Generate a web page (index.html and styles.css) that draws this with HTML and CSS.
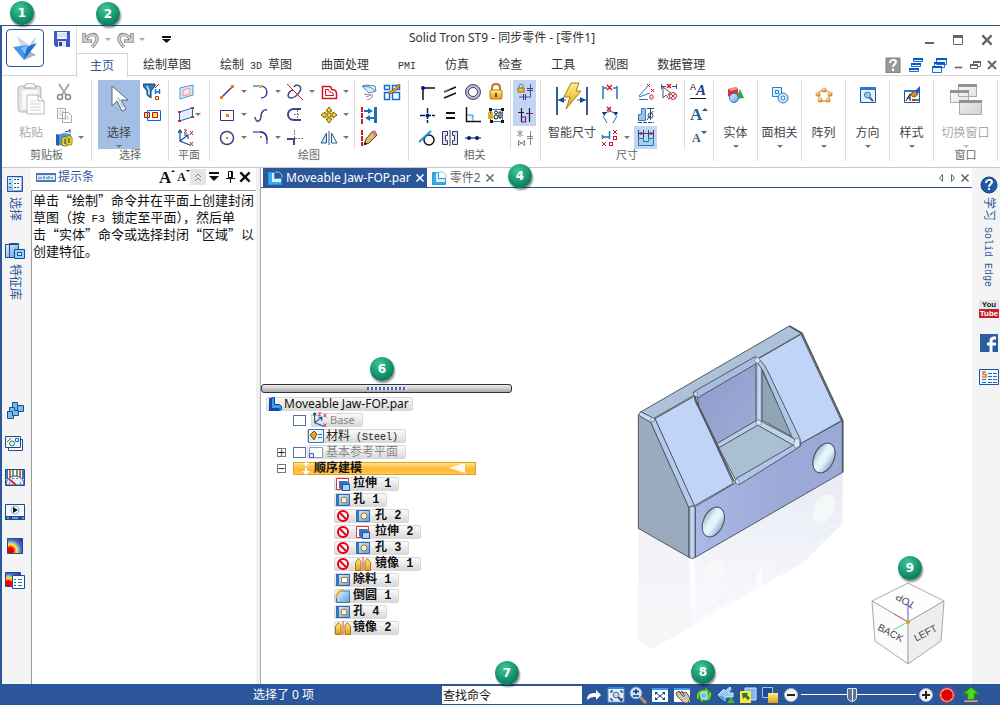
FILE: index.html
```html
<!DOCTYPE html>
<html lang="zh-CN">
<head>
<meta charset="utf-8">
<title>Solid Tron ST9 - 同步零件 - [零件1]</title>
<link rel="stylesheet" href="styles.css">
</head>
<body>
<svg class="sprite" aria-hidden="true">
  <defs>
    <linearGradient id="gBlue" x1="0" y1="0" x2="1" y2="1"><stop offset="0" stop-color="#e8f4ff"/><stop offset="1" stop-color="#5c9be0"/></linearGradient>
    <linearGradient id="gGold" x1="0" y1="0" x2="0" y2="1"><stop offset="0" stop-color="#fff08a"/><stop offset="1" stop-color="#e0a010"/></linearGradient>
    <linearGradient id="gGrey" x1="0" y1="0" x2="1" y2="1"><stop offset="0" stop-color="#fff"/><stop offset="1" stop-color="#d2d2d2"/></linearGradient>
    <linearGradient id="gFront" x1="0" y1="0" x2="1" y2="0"><stop offset="0" stop-color="#a9b8e5"/><stop offset=".6" stop-color="#9aa9d6"/><stop offset="1" stop-color="#9ba9d5"/></linearGradient>
    <linearGradient id="gBack" x1="0" y1="0" x2="1" y2="1"><stop offset="0" stop-color="#8f9ccc"/><stop offset="1" stop-color="#9dabd6"/></linearGradient>
    <linearGradient id="gHole" x1="0" y1="0" x2="1" y2=".3"><stop offset="0" stop-color="#8ea1b8"/><stop offset=".45" stop-color="#e4f4fc"/><stop offset=".7" stop-color="#e4f4fc"/><stop offset="1" stop-color="#a3b9d2"/></linearGradient>
    <linearGradient id="gEdge" x1="0" y1="0" x2="1" y2="0"><stop offset="0" stop-color="#8ea3c4"/><stop offset=".5" stop-color="#d0e2fb"/><stop offset="1" stop-color="#93a7cd"/></linearGradient>
    <linearGradient id="gMirror" x1="0" y1="0" x2="0" y2="1"><stop offset="0" stop-color="#e8ebf5"/><stop offset=".9" stop-color="#fafbfd"/></linearGradient>
    <radialGradient id="gHeat" cx=".2" cy=".8" r="1"><stop offset="0" stop-color="#e00"/><stop offset=".2" stop-color="#e00"/><stop offset=".3" stop-color="#ff8c1a"/><stop offset=".42" stop-color="#ffe93b"/><stop offset=".55" stop-color="#8fb6c8"/><stop offset=".7" stop-color="#4a6fc9"/><stop offset="1" stop-color="#5a2a9c"/></radialGradient>
    <radialGradient id="gBall" cx=".4" cy=".3" r=".8"><stop offset="0" stop-color="#ffdf9e"/><stop offset="1" stop-color="#c46a10"/></radialGradient>
  </defs>

  <symbol id="logo" viewBox="0 0 36 36"><path d="M10 6l12 9-8 3z" fill="#d0dbe8"/><path d="M29 6l-8 11 5 1z" fill="#c3cbd8"/><path d="M21 20l8 5-12 5z" fill="#a4b4ca"/><path d="M6 17l15-2-4 15z" fill="#3e96ee"/><path d="M30 13l-11 4-2 13z" fill="#1f6fd6"/><path d="M14 18l7-3-3 9z" fill="#7fc0f8"/></symbol>
  <symbol id="save" viewBox="0 0 16 16"><path d="M0 0h16v16H2l-2-2z" fill="#4258c0"/><path d="M3 1h10v7H3z" fill="#eef2fb"/><path d="M3 3h10M3 5h10" stroke="#c4cfe8"/><path d="M4 10h8v6H4z" fill="#dfe4f4"/><path d="M5 11h3v4H5z" fill="#31439c"/></symbol>
  <symbol id="undo" viewBox="0 0 18 18"><path d="M2 2v8h8M3 9C6 3 15 1 15 8c0 3-2 5-5 8" fill="none" stroke="#8f8f8f" stroke-width="3.500"/><path d="M2 3v7h7M3 9C6 3 15 2 15 8c0 3-2 5-5 8" fill="none" stroke="#d6d6d6" stroke-width="1.500"/></symbol>
  <symbol id="custom" viewBox="0 0 9 7"><path d="M0 0h9v2H0zM0 3h9L4.500 7z" fill="#111"/></symbol>
  <symbol id="min" viewBox="0 0 12 12"><path d="M1 8h9v2H1z" fill="#666"/></symbol>
  <symbol id="max" viewBox="0 0 12 12"><path d="M1.500 2.500h9v8h-9z" fill="none" stroke="#666"/><path d="M1 1h10v3H1z" fill="#666"/></symbol>
  <symbol id="restore" viewBox="0 0 12 12"><path d="M4.500 5V2.500h7v5H9M1.500 5.500h7v4h-7z" fill="none" stroke="#666"/><path d="M4 2h8v2H4zM1 5h8v2H1z" fill="#666"/></symbol>
  <symbol id="close" viewBox="0 0 12 12"><path d="M2 2l8 8M10 2l-8 8" stroke="currentColor" stroke-width="2"/></symbol>
  <symbol id="closeThin" viewBox="0 0 12 12"><path d="M2.500 2.500l7 7M9.500 2.500l-7 7" stroke="currentColor" stroke-width="1.500"/></symbol>
  <symbol id="help" viewBox="0 0 16 16"><path d="M1 1h14v15H1z" fill="#999" stroke="#7c7c7c"/><path d="M5 6c0-4 6-4 6-1 0 2-3 2-3 5M8 11.500V14" fill="none" stroke="#fff" stroke-width="2"/></symbol>
  <symbol id="cascade1" viewBox="0 0 16 16"><path d="M5.500 1.500h9v3h-9zM3.500 6.500h9v3h-9zM1.500 11.500h9v3h-9z" fill="#eaf3ff" stroke="#1670d8"/><path d="M5 2h10M3 7h10M1 12h10" stroke="#0b5ac4" stroke-width="2"/></symbol>
  <symbol id="cascade2" viewBox="0 0 16 16"><path d="M5.500 2.500h10v5h-10zM3.500 6.500h10v4h-10zM1.500 10.500h9v5h-9z" fill="#eaf3ff" stroke="#1670d8"/><path d="M5 2h11M3 6h11M1 10h10" stroke="#0b5ac4" stroke-width="2"/></symbol>

  <symbol id="paste" viewBox="0 0 30 32"><rect x="2" y="3" width="23" height="26" rx="3" fill="#e4e4e4" stroke="#b5b5b5"/><path d="M8 5q0-5 6-5t6 5z" fill="#f6f6f6" stroke="#a8a8a8"/><path d="M6 7h16v19H6z" fill="#fafafa"/><path d="M11 12h11l6 6v13H11z" fill="#fff" stroke="#b8b8b8"/><path d="M22 12v6h6" fill="none" stroke="#b8b8b8"/><path d="M14 18h6m-6 3h11m-11 3h11m-11 3h11" stroke="#d2d2d2"/></symbol>
  <symbol id="cut" viewBox="0 0 18 18"><path d="M4 1l7 11M14 1L7 12" stroke="#aaa" stroke-width="2"/><circle cx="5" cy="14" r="2.500" fill="none" stroke="#888" stroke-width="1.500"/><circle cx="13" cy="14" r="2.500" fill="none" stroke="#888" stroke-width="1.500"/></symbol>
  <symbol id="copy" viewBox="0 0 18 18"><path d="M2.500 2.500h8v10h-8zM7.500 6.500h6l3 3v7h-9z" fill="#fff" stroke="#aaa"/><path d="M4 5h5M4 7h3M4 9h3m2 2h5m-5 2h5" stroke="#c4c4c4"/></symbol>
  <symbol id="pasteSp" viewBox="0 0 18 18"><path d="M1 6l8-2 7 1v9l-8 3-7-2z" fill="#4f98d8"/><path d="M1 5v11l3 1V6z" fill="#1d62ac"/><path d="M10 3l4-1 1-2m0 4V1" fill="none" stroke="#1b3d78"/><rect x="8" y="9" width="4" height="7" rx="2" fill="none" stroke="#8b7200" stroke-width="3"/><rect x="8" y="9" width="4" height="7" rx="2" fill="none" stroke="#f4dd32" stroke-width="1.500"/><rect x="12" y="8" width="4" height="7" rx="2" fill="none" stroke="#8b7200" stroke-width="3"/><rect x="12" y="8" width="4" height="7" rx="2" fill="none" stroke="#f4dd32" stroke-width="1.500"/></symbol>
  <symbol id="cursor" viewBox="0 0 20 30"><path d="M3 2v20l5-5 5 10 4-2-5-9h7z" fill="#fff" stroke="#59697e"/><path d="M8 14l5 10 2-1-5-10z" fill="#c6d2e3"/></symbol>
  <symbol id="filter" viewBox="0 0 18 18"><path d="M0 1h12v2L8 8v7l-4-3V8L0 3z" fill="#2f78bb" stroke="#133e78"/><path d="M4 3l2 5v4" stroke="#cfeaff" stroke-width="1.500" fill="none"/><path d="M16 1l-4 4" stroke="#e4210d"/><path d="M12.500 6v5m4-5v5m-4-2h4" stroke="#0877dc" stroke-width="1.500"/><path d="M12.500 13.500h3v3h-3z" fill="#ffefb0" stroke="#a44308"/></symbol>
  <symbol id="boxes" viewBox="0 0 18 18"><path d="M1.500 6.500h5v5h-5z" fill="#ffe54d" stroke="#b6101d"/><path d="M4.500 4.500h13v10h-13z" fill="none" stroke="#0966d8"/><path d="M9.500 6.500h5v5h-5z" fill="#ffe54d" stroke="#b6101d"/></symbol>
  <symbol id="plane1" viewBox="0 0 18 18"><path d="M3 5l13-3v10L3 16z" fill="#dceafd" stroke="#4b94dd"/><path d="M6 7l7-2v6l-7 2z" fill="#fbe7ea" stroke="#ee9090"/></symbol>
  <symbol id="plane2" viewBox="0 0 18 18"><path d="M2.500 6l13-4v9l-13 4z" fill="#e2effe" stroke="#1c66c6"/><path d="M1 5h3v2H1zM14 1h3v2h-3zM1 14h3v2H1zM14 10h3v2h-3z" fill="#e4202a"/></symbol>
  <symbol id="axes" viewBox="0 0 18 18"><path d="M3 2v10l10 4M3 12l8-6M1 4l2-3 2 3M7 6h4v4" fill="none" stroke="#144c9c" stroke-width="1.200"/><path d="M7 1h3L7 4h3M13 2l3 4m0-4l-3 4M13 13l3 4m0-4l-3 4" stroke="#c12738" fill="none"/></symbol>

  <symbol id="line" viewBox="0 0 18 18"><path d="M4 14L15 3" stroke="#35358a" stroke-width="1.500"/><path d="M2 13h3v3H2zM13 2h3v3h-3z" fill="#f07a18"/></symbol>
  <symbol id="rect" viewBox="0 0 18 18"><path d="M2.500 4.500h13v10h-13z" fill="#fff" stroke="#35357a"/><path d="M8 8h3v3H8z" fill="#f07a18"/></symbol>
  <symbol id="circ" viewBox="0 0 18 18"><circle cx="9" cy="9" r="6.500" fill="#fff" stroke="#43438c" stroke-width="1.500"/><path d="M8 8h2v2H8z" fill="#f07a18"/></symbol>
  <symbol id="arc" viewBox="0 0 18 18"><path d="M1 3h8" stroke="#2b9cf0" stroke-width="1.500"/><path d="M8 3c9 0 9 12 1 12" fill="none" stroke="#43438c" stroke-width="1.500"/><path d="M7 2h3v3H7z" fill="#f5a043"/></symbol>
  <symbol id="curve" viewBox="0 0 18 18"><path d="M3 11c1 7 6 4 6-1 0-4 3-7 6-6" fill="none" stroke="#43438c" stroke-width="1.500"/></symbol>
  <symbol id="fillet" viewBox="0 0 18 18"><path d="M1 3h7q7 0 7 8v4" fill="none" stroke="#6a59e0" stroke-width="1.500"/><path d="M8 3q7 0 7 8" fill="none" stroke="#35357a" stroke-width="1.500"/><path d="M8 7h2v2H8z" fill="#f07a18"/></symbol>
  <symbol id="trim" viewBox="0 0 18 18"><path d="M8 4c2-4 9-1 6 4-2 4-6 7-9 7-5 0-3-7 2-8" fill="none" stroke="#43438c" stroke-width="1.500"/><path d="M1 1l16 16" stroke="#e0161e"/></symbol>
  <symbol id="slot" viewBox="0 0 18 18"><path d="M15 3H8C0 3 0 14 8 14h7" fill="none" stroke="#43438c" stroke-width="2"/><path d="M8 8.500h5M11.500 4v9" fill="none" stroke="#777" stroke-dasharray="2 1"/></symbol>
  <symbol id="cross" viewBox="0 0 18 18"><path d="M1 10h7v6" fill="none" stroke="#4b4294" stroke-width="2"/><path d="M8.500 1v8M9 9.500h8" stroke="#777" stroke-dasharray="2 1"/></symbol>
  <symbol id="offset" viewBox="0 0 18 18"><path d="M2.500 3.500h7q2 0 2 3 5 0 5 4v5h-14z" fill="#fff" stroke="#d51322" stroke-width="1.500"/><path d="M5.500 6.500h3q0 3 3 3 2 0 2 3h-8z" fill="#fff" stroke="#d51322"/></symbol>
  <symbol id="move" viewBox="0 0 18 18"><path d="M9 1l3 4h-2v3h3V6l4 3-4 3v-2h-3v3h2l-3 4-3-4h2v-3H5v2L1 9l4-3v2h3V5H6z" fill="#ffdf36" stroke="#775600"/></symbol>
  <symbol id="mirror2" viewBox="0 0 18 18"><path d="M6.500 4v10H1z" fill="#c9e5f6" stroke="#27598d"/><path d="M11.500 4v10H17z" fill="#eef7fd" stroke="#27598d"/><path d="M9 2v14" stroke="#43438c"/></symbol>
  <symbol id="sheets" viewBox="0 0 18 18"><path d="M2 3l8 1 6 4-7 2z" fill="#dcecff" stroke="#4d82bb"/><path d="M3 3l3-1 9 1 1 5" fill="none" stroke="#4d82bb"/><path d="M4 11l7 1-5 2m6-3q2 4-5 6" fill="none" stroke="#a77bb4"/></symbol>
  <symbol id="frames" viewBox="0 0 18 18"><path d="M1.500 2.500h5v4h-5zM9.500 2.500h7v4h-7zM1.500 9.500h5v7h-5zM9.500 9.500h7v7h-7z" fill="#fff" stroke="#126bd0" stroke-width="1.500"/><path d="M6 9l4-2 6-6 1 2-6 6q-3 3-6 1z" fill="#f0a424" stroke="#86500e" stroke-width=".8"/></symbol>
  <symbol id="arrows" viewBox="0 0 18 18"><path d="M2 1v17" stroke="#cd1d2b" stroke-width="2" stroke-dasharray="5 1"/><path d="M15.500 1v16" stroke="#276aaf" stroke-width="3"/><path d="M4 5h5M14 12H9" stroke="#1376cf" stroke-width="2"/><path d="M8 2l5 3-5 3zM10 9l-5 3 5 3z" fill="#1376cf"/></symbol>
  <symbol id="pencil" viewBox="0 0 18 18"><path d="M2 1v16" stroke="#cd1d2b" stroke-width="2" stroke-dasharray="5 1"/><path d="M4 16l2-6 7-8 4 4-8 8z" fill="#e2bd61" stroke="#4d3c1d"/><path d="M12 3l3-2 2 4-2 2z" fill="#e4659c"/><path d="M4 16l1-3 2 2z" fill="#111"/></symbol>

  <symbol id="connect" viewBox="0 0 18 18"><path d="M5 17V5h12" fill="none" stroke="#111" stroke-width="1.500"/><circle cx="5" cy="5" r="2" fill="#001a8c"/></symbol>
  <symbol id="parallel" viewBox="0 0 18 18"><path d="M3 9l12-5M3 15l12-5" stroke="#111" stroke-width="1.500"/><path d="M3 9l6-3" stroke="#5a8ab6"/></symbol>
  <symbol id="rings" viewBox="0 0 18 18"><circle cx="9" cy="9" r="7.500" fill="#b7b8cf" stroke="#43436d"/><circle cx="9" cy="9" r="4.500" fill="#fff" stroke="#43436d"/></symbol>
  <symbol id="lock" viewBox="0 0 18 18"><path d="M5 8V5q0-4 4-4t4 4v3" fill="none" stroke="#b47d0d" stroke-width="2"/><rect x="3" y="7" width="12" height="9" rx="1" fill="url(#gGold)" stroke="#b47d0d"/><path d="M8 10h2v4H8z" fill="#705008"/></symbol>
  <symbol id="align" viewBox="0 0 18 18"><path d="M2 9.500h15M9.500 2v15" stroke="#001a6c" stroke-width="1.500" stroke-dasharray="5 1"/><circle cx="9.500" cy="9.500" r="2" fill="#001a8c"/></symbol>
  <symbol id="equal" viewBox="0 0 18 18"><path d="M5 7h9M5 12h9" stroke="#111" stroke-width="2"/></symbol>
  <symbol id="perp" viewBox="0 0 18 18"><path d="M2.500 1v14.500H17" fill="none" stroke="#111" stroke-width="1.500"/><path d="M3 9h6v6" fill="#d8eeff" stroke="#3b8ed0"/></symbol>
  <symbol id="group" viewBox="0 0 18 18"><path d="M3.500 3.500h12v12h-12z" fill="#fff" stroke="#267ad0"/><path d="M2 2h3v3H2zM14 2h3v3h-3zM14 14h3v3h-3zM3 14h3v3H3z" fill="#111"/><rect x="1" y="8" width="5" height="5" fill="#e4ad21"/><path d="M2 8V6h3v2" fill="none" stroke="#a8790c"/><circle cx="9" cy="6.500" r="1.500" fill="none" stroke="#111"/><circle cx="9" cy="11" r="2" fill="none" stroke="#111"/><path d="M12 6h2v6h-2z" fill="none" stroke="#111"/></symbol>
  <symbol id="tangent" viewBox="0 0 18 18"><circle cx="11" cy="11" r="5" fill="#fff" stroke="#111" stroke-width="1.500"/><path d="M1 13L13 2" stroke="#1d93df" stroke-width="2"/></symbol>
  <symbol id="sym" viewBox="0 0 18 18"><path d="M1.500 2.500h5v4h-2v5h2v4h-5zM16.500 2.500h-5v4h2v5h-2v4h5z" fill="#dbe3ef" stroke="#34346b"/><path d="M9 1v16" stroke="#34346b"/></symbol>
  <symbol id="horiz" viewBox="0 0 18 18"><path d="M1 9h16" stroke="#111"/><circle cx="5" cy="9" r="2" fill="#001a8c"/><circle cx="13" cy="9" r="2" fill="#001a8c"/></symbol>
  <symbol id="keep1" viewBox="0 0 18 18"><path d="M3 5V3q0-2 2-2t2 2v2" fill="none" stroke="#6f7d92"/><path d="M2 5h6v4H2z" fill="#edc23d" stroke="#926f13"/><path d="M11 5.500h6M11 7.500h6M7.500 11v6m2-6v6" stroke="#7c176a"/><path d="M14.500 1v13H3" stroke="#215ec0" fill="none"/></symbol>
  <symbol id="keep2" viewBox="0 0 18 18"><path d="M5.500 2v14M13.500 2v14M2 6.500h6" stroke="#202033" stroke-width="1.200"/><path d="M10 7.500h7M5.500 11h4v5h-4" fill="none" stroke="#83136f" stroke-width="1.200"/></symbol>
  <symbol id="keep3" viewBox="0 0 18 18"><path d="M4 1v7M1 2l6 5M1 7l6-5M14.500 2v14M11 7.500h6M11 9.500h6M2.500 11v6m0-5l6 4m0-5v6m-6-1l6-4" stroke="#888"/></symbol>

  <symbol id="smart" viewBox="0 0 34 34"><path d="M2 5v28M32 5v28" stroke="#315f9c" stroke-width="2"/><path d="M2 18h9m11 0h9" stroke="#315f9c"/><path d="M3 18l6-3v6zM31 18l-6-3v6z" fill="#164d99"/><path d="M16 1h8l-3 8h5L11 27l4-12H9z" fill="url(#gGold)" stroke="#b47c13"/></symbol>
  <symbol id="dim1" viewBox="0 0 18 18"><path d="M2 3v13M16 3v13M3 5h3m6 0h4" stroke="#2376b7" stroke-width="1.500"/><path d="M6 2l5 5m0-5L6 7" stroke="#d81522" stroke-width="1.500"/></symbol>
  <symbol id="dim2" viewBox="0 0 18 18"><path d="M2 13L11 3M2 14l11-4M2 16.500h9" stroke="#2376b7"/><path d="M10 1l3 3m0-3l-3 3M14 6l3 3m0-3l-3 3" stroke="#d81522"/><rect x="13" y="12" width="3" height="4" rx="1" fill="none" stroke="#d81522"/></symbol>
  <symbol id="dim3" viewBox="0 0 18 18"><path d="M1.500 1v5M16.500 1v5M2 3.500h4m6 0h4" stroke="#2a5896"/><path d="M7 1l4 4m0-4L7 5" stroke="#d81522" stroke-width="1.500"/><path d="M3 4v11l3-3 3 4 2-1-3-4h4z" fill="#fff" stroke="#555"/><circle cx="13" cy="13" r="3.500" fill="#fff" stroke="#c12738"/><path d="M11 11l4 4m0-4l-4 4" stroke="#c12738"/></symbol>
  <symbol id="dim4" viewBox="0 0 18 18"><path d="M6 1l4 4m0-4L6 5" stroke="#d81522" stroke-width="1.500"/><path d="M3 8q6-5 12 0M2 10l4 7M16 10l-4 7" fill="none" stroke="#2376b7"/><path d="M1 6l5 0-3 4zM17 6l-5 0 3 4z" fill="#123c72"/></symbol>
  <symbol id="dim5" viewBox="0 0 18 18"><path d="M1.500 8.500h3v-6h4v12h-7z" fill="#9bc3ea" stroke="#3977b4"/><path d="M1 16.500h16" stroke="#284d7c" stroke-dasharray="4 1"/><path d="M10 2.500h7M13.500 3v11M10 14l6-9" stroke="#284d7c" fill="none"/><circle cx="13.500" cy="9.500" r="2.500" fill="none" stroke="#284d7c"/></symbol>
  <symbol id="dim6" viewBox="0 0 18 18"><path d="M1 8h8M8.500 2v8M1.500 6v4" fill="none" stroke="#2376b7" stroke-width="1.500"/><path d="M12 1l4 4m0-4l-4 4M1 13l4 4m0-4l-4 4" stroke="#d81522"/><rect x="12.500" y="7.500" width="3" height="3" fill="none" stroke="#d81522"/><rect x="8.500" y="13.500" width="3" height="3" fill="none" stroke="#d81522"/></symbol>
  <symbol id="dim7" viewBox="0 0 18 18"><path d="M1.500 1v8M16.500 1v8M6.500 1v8M11.500 1v8M1 4.500h16" stroke="#22467d"/><path d="M1.500 9.500h5v3h5v-3h5v7h-15z" fill="#9ed3f2" stroke="#2e72b8"/><path d="M3 3l2 3m0-3L3 6m10-3l2 3m0-3l-2 3" stroke="#cc263a"/></symbol>
  <symbol id="triUp" viewBox="0 0 6 3"><path d="M0 3l3-3 3 3z" fill="currentColor"/></symbol>
  <symbol id="triDn" viewBox="0 0 6 3"><path d="M0 0h6L3 3z" fill="currentColor"/></symbol>

  <symbol id="solids" viewBox="0 0 18 18"><path d="M1 3l8-2 2 2v8l-7 1-3-2z" fill="#d83237"/><path d="M1 3l8-2 2 2-7 2z" fill="#f59590"/><path d="M13 3l4 9-8 1z" fill="#31aa35"/><circle cx="7" cy="12" r="4.500" fill="url(#gBlue)" stroke="#2c78bf"/></symbol>
  <symbol id="faces" viewBox="0 0 18 18"><path d="M1.500 1.500h9v9h-9zM4.500 4.500h3v3h-3z" fill="#e2f1fe" stroke="#277fc9"/><circle cx="12" cy="12" r="5" fill="#d4eafc" stroke="#277fc9"/><circle cx="12" cy="12" r="2" fill="#fff" stroke="#277fc9"/></symbol>
  <symbol id="pattern" viewBox="0 0 18 18"><path d="M9 3l6 4-2 8H5L3 7z" fill="none" stroke="#ba7828"/><circle cx="9" cy="4" r="2.500" fill="url(#gBall)"/><circle cx="15" cy="8" r="2.500" fill="url(#gBall)"/><circle cx="13" cy="14" r="2.500" fill="url(#gBall)"/><circle cx="5" cy="14" r="2.500" fill="url(#gBall)"/><circle cx="3" cy="8" r="2.500" fill="url(#gBall)"/></symbol>
  <symbol id="orient" viewBox="0 0 18 18"><path d="M1.500 1.500h15v15h-15z" fill="#e8f3ff" stroke="#1855a3"/><path d="M1 1h16v3H1z" fill="#2a78d4"/><path d="M10 11l4 4" stroke="#4b5b70" stroke-width="2"/><circle cx="8.500" cy="9" r="3" fill="#9cc9ee" stroke="#4572a5"/></symbol>
  <symbol id="style" viewBox="0 0 18 18"><path d="M1.500 4.500h15v12h-15z" fill="#fff" stroke="#1855a3"/><path d="M1 4h16v2H1z" fill="#2a78d4"/><path d="M3 15l4-7v7M4 12h3" fill="none" stroke="#111"/><path d="M9 13h7v2H9z" fill="#2f9e37"/><path d="M9 13h3v2H9z" fill="#d72e24"/><path d="M7 8q4 6 8 0l-3-3z" fill="#d68a3a" stroke="#6a3d14" stroke-width=".8"/><path d="M12 5l5-5v6l-3 2z" fill="#2264a8"/></symbol>
  <symbol id="windows" viewBox="0 0 34 34"><path d="M9.500 2.500h18v12h-18zM1.500 8.500h18v12h-18zM10.500 18.500h22v14h-22z" fill="url(#gGrey)" stroke="#aaa"/><path d="M9 2h19v3H9zM1 8h19v3H1zM10 18h23v3H10z" fill="#929292"/></symbol>

  <symbol id="solidtag" viewBox="0 0 20 9"><path d="M0 0h20v9H0z" fill="#4779b8"/><path d="M1 2h18v5H1z" fill="#dce9f7"/><path d="M3 4v2m2-2v2m3-3v3m3-2v2m2-3v3m3-2v2" stroke="#3c6eae"/></symbol>
  <symbol id="chev" viewBox="0 0 16 16"><path d="M5 8l3-3 3 3M5 12l3-3 3 3" fill="none" stroke="#888"/></symbol>
  <symbol id="menu" viewBox="0 0 16 16"><path d="M3 3h10v2H3zM3 7h10l-5 5z" fill="#111"/></symbol>
  <symbol id="pin" viewBox="0 0 16 16"><path d="M6.500 2.500h4v6h-4zM4 9.500h9M8.500 10v4M9.500 3v6" fill="none" stroke="#111"/></symbol>

  <symbol id="railList" viewBox="0 0 20 20"><path d="M2.500 2.500h15v15h-15z" fill="url(#gBlue)" stroke="#24529b"/><path d="M8 4h8v12H8z" fill="#fff"/><path d="M4 5.500h2m-2 4h2m-2 4h2m3-8h6m-6 4h6m-6 4h6" stroke="#24529b" stroke-dasharray="2 1"/></symbol>
  <symbol id="railLib" viewBox="0 0 20 20"><path d="M.500 3.500h4v13h-4zM4.500 2.500h9v14h-9z" fill="url(#gBlue)" stroke="#1d4c91"/><path d="M.500 3h12v1H.500z" fill="#1d4c91"/><path d="M9.500 8.500h10v9h-10z" fill="#8ad0ff" stroke="#1d4c91"/><path d="M12.500 11.500h4v3h-4z" fill="#d9f2ff" stroke="#1d4c91"/></symbol>
  <symbol id="railFam" viewBox="0 0 20 20"><path d="M7.500 2.500h5v3h6v6h-5v4h-5v3h-6v-7h2v-4h3z" fill="#76bdec" stroke="#1d4c91"/><path d="M4.500 7.500h5v3h4m-1-5v6m-10 0h5v4h2" fill="none" stroke="#1d4c91"/></symbol>
  <symbol id="railLay" viewBox="0 0 20 20"><path d="M3.500 5.500h14v11h-14z" fill="#fff" stroke="#1d4c91"/><path d="M.500 2.500h15v11H.500z" fill="#edf7ff" stroke="#1d4c91"/><path d="M2 8l4-4" stroke="#d3272f"/><circle cx="7" cy="9.500" r="2.500" fill="none" stroke="#338c42"/><path d="M10.500 4.500h3v3h-3z" fill="none" stroke="#246bc0"/></symbol>
  <symbol id="railGauge" viewBox="0 0 20 20"><path d="M.500 1.500h19v16H.500z" fill="#fff" stroke="#1d4c91"/><path d="M5 2v8M15 2v8" stroke="#d9623e" stroke-width="2"/><path d="M8 2v6M12 2v6" stroke="#5aa95f" stroke-width="2"/><path d="M2 2v9M18 2v9" stroke="#3872b8" stroke-width="2"/><path d="M1 17c0-12 18-12 18 0z" fill="#e8f3fc" stroke="#1d4c91"/><path d="M4 11l7 6" stroke="#e0242c" stroke-width="2"/><path d="M4 15h1m3-5v1m4-1v1m3 4h1" stroke="#111"/></symbol>
  <symbol id="railPlay" viewBox="0 0 20 20"><path d="M.500 2.500h19v13H.500z" fill="#f1f8fe" stroke="#1d4c91"/><circle cx="10" cy="8" r="4" fill="#fff" stroke="#93aecb"/><path d="M8 5l5 3-5 3z" fill="#111"/><path d="M0 14h20v4H0z" fill="#1d4c91"/><path d="M2 16h2m3 0h6m4 0h2" stroke="#d5eaff"/></symbol>
  <symbol id="railHeat" viewBox="0 0 20 20"><path d="M2.500 2.500h15v15h-15z" fill="url(#gHeat)" stroke="#1d4c91"/></symbol>
  <symbol id="railHeat2" viewBox="0 0 20 20"><path d="M.500 2.500h15v14H.500z" fill="url(#gHeat)" stroke="#1d4c91"/><path d="M7.500 5.500h12v13h-12z" fill="#fff" stroke="#1d4c91"/><path d="M9 9.500h2m-2 3h2m-2 3h2m2-6h4m-4 3h4m-4 3h4" stroke="#246bc0"/></symbol>
  <symbol id="railHelp" viewBox="0 0 20 20"><circle cx="10" cy="10" r="8" fill="#2558a9" stroke="#183f7e"/><path d="M7 8c0-4 6-4 6-1 0 2-3 2-3 5m0 1v2" fill="none" stroke="#fff" stroke-width="2"/></symbol>
  <symbol id="facebook" viewBox="0 0 20 20"><path d="M1 1h18v18H1z" fill="#2a5c9f"/><path d="M17 5h-2q-3 0-3 3v11M8 11h9" fill="none" stroke="#fff" stroke-width="3"/></symbol>
  <symbol id="sdoc" viewBox="0 0 20 20"><path d="M.500 2.500h19v15H.500z" fill="#eef7ff" stroke="#24529b"/><path d="M7 5H4v2.500h3V10H3" fill="none" stroke="#e07d22" stroke-width="1.500"/><path d="M9 6.500h4m1 0h4M9 9.500h4m1 0h4M3 12.500h4m2 0h4m1 0h4M3 15.500h4m2 0h4m1 0h4" stroke="#246bc0"/></symbol>

  <symbol id="part" viewBox="0 0 16 16"><path d="M2.500 2.500l5-1v7h5l2 2v3l-2 1h-10z" fill="#3f9fe8" stroke="#0b3f8e"/><path d="M2 2l3 1v9h8l-2 3H2z" fill="#0a4dac"/></symbol>
  <symbol id="partTab" viewBox="0 0 16 16"><path d="M1.500 2.500h6v6h7v6h-13z" fill="#d9f0fd" stroke="#2a9ad8"/><path d="M2 3h3v9h9v2H2z" fill="#3aa9e6"/><path d="M8 2h4l3 3v3" fill="none" stroke="#7fc4ea"/></symbol>
  <symbol id="material" viewBox="0 0 16 16"><path d="M.500 1.500h15v13H.500z" fill="#ecf6ff" stroke="#3977b4"/><path d="M2 7l4-4 3 3-3 6z" fill="#e2a421" stroke="#6d5014"/><path d="M10 6.500h4m-4 3h4" stroke="#2d70bd"/></symbol>
  <symbol id="refplane" viewBox="0 0 16 16"><path d="M1.500 3.500h13v10h-13z" fill="#fff" stroke="#8a9ccf"/><path d="M1.500 9.500h4v4h-4z" fill="#dce5f8" stroke="#4862b4"/></symbol>
  <symbol id="extrude" viewBox="0 0 16 16"><path d="M1.500 2.500h12v11h-12z" fill="#fff" stroke="#df3333"/><path d="M4 5h8l3 3v7H8l-4-3z" fill="#3972b8"/><path d="M7.500 8.500h7v6h-7z" fill="#a8d2ff" stroke="#245793"/></symbol>
  <symbol id="hole" viewBox="0 0 16 16"><path d="M1.500 2.500h13v11h-13z" fill="url(#gBlue)" stroke="#2f65ac"/><path d="M1 2h3v12H1z" fill="#3972b8"/><circle cx="9" cy="8" r="3" fill="#fff0c6" stroke="#98783b"/></symbol>
  <symbol id="cutout" viewBox="0 0 16 16"><path d="M1.500 2.500h13v11h-13z" fill="url(#gBlue)" stroke="#2f65ac"/><path d="M1 2h3v12H1z" fill="#3972b8"/><path d="M6.500 5.500h6v5h-6z" fill="#fff" stroke="#ad8225"/></symbol>
  <symbol id="round" viewBox="0 0 16 16"><path d="M1.500 14.500V9q1-6 7-6h6v11.500z" fill="url(#gBlue)" stroke="#3977b4"/><path d="M1 10Q2 2 9 2" fill="none" stroke="#eeb729" stroke-width="2"/></symbol>
  <symbol id="mirror" viewBox="0 0 16 16"><path d="M.500 14.500v-8l3-4 2.500 3v9zM15.500 14.500v-8l-3-4-2.500 3v9z" fill="url(#gGold)" stroke="#aa780f"/><path d="M8 1v14" stroke="#ef4040"/></symbol>
  <symbol id="ban" viewBox="0 0 16 16"><circle cx="8" cy="8" r="5" fill="#fff" stroke="#e60012" stroke-width="2"/><path d="M4 4l8 8" stroke="#e60012" stroke-width="2"/></symbol>
  <symbol id="seq" viewBox="0 0 16 16"><path d="M7 1h2v2h2l-3 4-3-4h2zM7 8h2v3h3l-4 4-4-4h3z" fill="#fff"/></symbol>

  <symbol id="go" viewBox="0 0 18 18"><path d="M2 14q0-7 7-7h2V4l5 5-5 5v-3H9q-4 0-7 3z" fill="#fff"/></symbol>
  <symbol id="zoomArea" viewBox="0 0 18 18"><path d="M1 2h16v14H1z" fill="#e4f0fc" stroke="#4c9bed"/><path d="M1 1h16v2H1z" fill="#3384dc"/><path d="M4 5h2m-2 0v2m9-2h2v2M4 12v2h2m7 0h2v-2" fill="none" stroke="#111"/><circle cx="9" cy="9" r="3" fill="#b2d8f7" stroke="#5c6e81"/><path d="M11 11l4 4" stroke="#444" stroke-width="2"/></symbol>
  <symbol id="zoom" viewBox="0 0 18 18"><path d="M11 11l6 6" stroke="#d28c59" stroke-width="3"/><circle cx="7" cy="7" r="6" fill="#cbe5fa" stroke="#679bd2"/><path d="M7 3v5M4 5.500h6M4 10h6" stroke="#173b73" stroke-width="1.500"/></symbol>
  <symbol id="fit" viewBox="0 0 18 18"><path d="M1 3h16v13H1z" fill="#fff"/><path d="M1 2h16v2H1z" fill="#429be8"/><path d="M4 6h3L4 9zM14 6h-3l3 3zM4 14v-3l3 3zM14 14v-3l-3 3z" fill="#17468a"/><path d="M5 7l8 6m0-6l-8 6" stroke="#17468a"/></symbol>
  <symbol id="pan" viewBox="0 0 18 18"><path d="M1 3h16v13H1z" fill="#fff"/><path d="M1 2h16v2H1z" fill="#429be8"/><path d="M3 7l3-2 1 2 2-2 2 2 2-1 4 6-2 5h-4L4 10z" fill="#d1c4b5" stroke="#594c44"/><path d="M6 6l5 5m-2-5l3 4" stroke="#594c44"/></symbol>
  <symbol id="rotate" viewBox="0 0 18 18"><path d="M2 13C0 6 6 3 10 4V1l5 5-5 3V7C6 6 3 9 5 14zM16 5c2 7-3 12-8 9v3l-4-4 5-3v2q5 1 4-5z" fill="#69da36" stroke="#166d20" stroke-width=".6"/><circle cx="9" cy="9.500" r="3.500" fill="#6fc3f2" stroke="#e8f4ff"/></symbol>
  <symbol id="look" viewBox="0 0 18 18"><path d="M1 9l6-6v3l6-5 1 2-3 4h5v4H8v4z" fill="#94c8f4" stroke="#dceeff"/><path d="M1 9l6 2 1 4z" fill="#4a92d8"/><path d="M10 17l4-6 4 6z" fill="#45b530"/></symbol>
  <symbol id="views" viewBox="0 0 18 18"><path d="M6 2h11v12H6z" fill="#7fbaf0" stroke="#cde8ff"/><path d="M1 5h11v12H1z" fill="#ffe43f"/><path d="M3 7h6L8 9l3 3-2 2-3-3-2 2z" fill="#237a25"/></symbol>
  <symbol id="colors" viewBox="0 0 18 18"><path d="M1.500 1.500h10v10h-10z" fill="#1d4c91" stroke="#9bc7ef"/><path d="M7 7h10v10H7z" fill="url(#gGold)"/></symbol>
  <symbol id="minus" viewBox="0 0 16 16"><circle cx="8" cy="8" r="6.500" fill="#f2f5f7" stroke="#a9b8ca"/><path d="M4 8h8" stroke="#222" stroke-width="2"/></symbol>
  <symbol id="plus" viewBox="0 0 16 16"><circle cx="8" cy="8" r="6.500" fill="#f2f5f7" stroke="#a9b8ca"/><path d="M4 8h8M8 4v8" stroke="#222" stroke-width="2"/></symbol>
  <symbol id="record" viewBox="0 0 16 16"><circle cx="8" cy="8" r="6.500" fill="#f6c7c7" stroke="#b44"/><path d="M6 3h4l3 3v4l-3 3H6l-3-3V6z" fill="#e00000"/></symbol>
  <symbol id="up" viewBox="0 0 16 16"><path d="M8 1l7 6h-4v5H5V7H1z" fill="#4edb15" stroke="#2b8d18"/><path d="M2 13.500h12" stroke="#f0f0f0"/><path d="M2 14.500h12" stroke="#a33"/></symbol>
</svg>

<div class="page">
  <div class="top-strip">
    <span class="badge b1">1</span>
    <span class="badge b2">2</span>
  </div>

  <div class="app">
    <header class="header">
      <div class="brand">
        <button class="app-btn" aria-label="应用程序"><svg><use href="#logo"/></svg></button>
        <button class="bare" aria-label="保存"><svg class="i16"><use href="#save"/></svg></button>
      </div>
      <div class="title-row">
        <div class="quick">
          <button class="bare drop" aria-label="撤销"><svg class="i18"><use href="#undo"/></svg></button>
          <button class="bare drop" aria-label="重做"><svg class="i18 flip"><use href="#undo"/></svg></button>
          <button class="bare custom" aria-label="自定义"><svg><use href="#custom"/></svg></button>
        </div>
        <h1 class="title">Solid Tron ST9 - 同步零件 - [零件1]</h1>
        <div class="win-ctl">
          <button class="bare" aria-label="最小化"><svg class="i12"><use href="#min"/></svg></button>
          <button class="bare" aria-label="最大化"><svg class="i12"><use href="#max"/></svg></button>
          <button class="bare" aria-label="关闭"><svg class="i14"><use href="#close"/></svg></button>
        </div>
      </div>
      <div class="tab-row">
        <nav class="tabs">
          <button class="tab active">主页</button>
          <button class="tab">绘制草图</button>
          <button class="tab">绘制<span class="lat"> 3D </span>草图</button>
          <button class="tab">曲面处理</button>
          <button class="tab"><span class="lat">PMI</span></button>
          <button class="tab">仿真</button>
          <button class="tab">检查</button>
          <button class="tab">工具</button>
          <button class="tab">视图</button>
          <button class="tab">数据管理</button>
        </nav>
        <div class="doc-ctl">
          <button class="bare" aria-label="帮助"><svg class="i16"><use href="#help"/></svg></button>
          <button class="bare" aria-label="平铺"><svg class="i16"><use href="#cascade1"/></svg></button>
          <button class="bare" aria-label="层叠"><svg class="i16"><use href="#cascade2"/></svg></button>
          <span class="doc-win">
            <button class="bare" aria-label="最小化文档"><svg class="i10"><use href="#min"/></svg></button>
            <button class="bare" aria-label="还原文档"><svg class="i12"><use href="#restore"/></svg></button>
            <button class="bare" aria-label="关闭文档"><svg class="i12"><use href="#close"/></svg></button>
          </span>
        </div>
      </div>
    </header>

    <div class="ribbon">
      <section class="group clip">
        <div class="tools">
          <button class="big muted w38"><svg class="i-paste"><use href="#paste"/></svg><span>粘贴</span></button>
          <div class="cols">
            <button class="tool" aria-label="剪切"><svg><use href="#cut"/></svg></button>
            <button class="tool" aria-label="复制"><svg><use href="#copy"/></svg></button>
            <button class="tool drop" aria-label="选择性粘贴"><svg><use href="#pasteSp"/></svg></button>
          </div>
        </div>
        <h2>剪贴板</h2>
      </section>
      <section class="group sel">
        <div class="tools">
          <button class="big pressed w42 drop-big"><svg class="i-cursor"><use href="#cursor"/></svg><span>选择</span></button>
          <div class="cols">
            <button class="tool" aria-label="过滤器"><svg><use href="#filter"/></svg></button>
            <button class="tool" aria-label="重叠"><svg><use href="#boxes"/></svg></button>
          </div>
        </div>
        <h2>选择</h2>
      </section>
      <section class="group plane">
        <div class="tools">
          <div class="cols">
            <button class="tool" aria-label="重合平面"><svg><use href="#plane1"/></svg></button>
            <button class="tool drop tight" aria-label="更多平面"><svg><use href="#plane2"/></svg></button>
            <button class="tool" aria-label="坐标系"><svg><use href="#axes"/></svg></button>
          </div>
        </div>
        <h2>平面</h2>
      </section>
      <section class="group draw">
        <div class="tools">
          <div class="cols c34">
            <button class="tool drop" aria-label="直线"><svg><use href="#line"/></svg></button>
            <button class="tool drop" aria-label="矩形"><svg><use href="#rect"/></svg></button>
            <button class="tool drop" aria-label="圆"><svg><use href="#circ"/></svg></button>
            <button class="tool drop" aria-label="圆弧"><svg><use href="#arc"/></svg></button>
            <button class="tool" aria-label="曲线"><svg><use href="#curve"/></svg></button>
            <button class="tool drop" aria-label="圆角"><svg><use href="#fillet"/></svg></button>
            <button class="tool drop" aria-label="修剪"><svg><use href="#trim"/></svg></button>
            <button class="tool" aria-label="槽"><svg><use href="#slot"/></svg></button>
            <button class="tool" aria-label="修剪拐角"><svg><use href="#cross"/></svg></button>
            <button class="tool drop" aria-label="偏置"><svg><use href="#offset"/></svg></button>
            <button class="tool drop" aria-label="移动"><svg><use href="#move"/></svg></button>
            <button class="tool drop" aria-label="镜像"><svg><use href="#mirror2"/></svg></button>
          </div>
          <div class="cols c23 split">
            <button class="tool" aria-label="投影"><svg><use href="#sheets"/></svg></button>
            <button class="tool" aria-label="转换"><svg><use href="#arrows"/></svg></button>
            <button class="tool" aria-label="构造"><svg><use href="#pencil"/></svg></button>
            <button class="tool" aria-label="清理"><svg><use href="#frames"/></svg></button>
          </div>
        </div>
        <h2>绘图</h2>
      </section>
      <section class="group relate">
        <div class="tools">
          <div class="cols c23">
            <button class="tool" aria-label="连接"><svg><use href="#connect"/></svg></button>
            <button class="tool" aria-label="水平/竖直"><svg><use href="#align"/></svg></button>
            <button class="tool" aria-label="相切"><svg><use href="#tangent"/></svg></button>
            <button class="tool" aria-label="平行"><svg><use href="#parallel"/></svg></button>
            <button class="tool" aria-label="相等"><svg><use href="#equal"/></svg></button>
            <button class="tool" aria-label="对称"><svg><use href="#sym"/></svg></button>
            <button class="tool" aria-label="同心"><svg><use href="#rings"/></svg></button>
            <button class="tool" aria-label="垂直"><svg><use href="#perp"/></svg></button>
            <button class="tool" aria-label="共线"><svg><use href="#horiz"/></svg></button>
            <button class="tool" aria-label="锁定"><svg><use href="#lock"/></svg></button>
            <button class="tool" aria-label="刚性集"><svg><use href="#group"/></svg></button>
          </div>
          <div class="cols split narrow">
            <button class="tool on" aria-label="保持关系"><svg><use href="#keep1"/></svg></button>
            <button class="tool on" aria-label="关系手柄"><svg><use href="#keep2"/></svg></button>
            <button class="tool off" aria-label="关系助手"><svg><use href="#keep3"/></svg></button>
          </div>
        </div>
        <h2>相关</h2>
      </section>
      <section class="group dims">
        <div class="tools">
          <button class="big w50"><svg class="i-smart"><use href="#smart"/></svg><span>智能尺寸</span></button>
          <div class="cols">
            <button class="tool" aria-label="间距"><svg><use href="#dim1"/></svg></button>
            <button class="tool" aria-label="角度"><svg><use href="#dim4"/></svg></button>
            <button class="tool drop" aria-label="坐标尺寸"><svg><use href="#dim6"/></svg></button>
          </div>
          <div class="cols c23">
            <button class="tool wide" aria-label="角坐标"><svg><use href="#dim2"/></svg></button>
            <button class="tool wide" aria-label="对称直径"><svg><use href="#dim5"/></svg></button>
            <button class="tool wide on" aria-label="自动尺寸"><svg><use href="#dim7"/></svg></button>
            <button class="tool wide" aria-label="选取尺寸"><svg><use href="#dim3"/></svg></button>
          </div>
          <div class="cols split">
            <button class="letter under" aria-label="样式文字"><span class="small-a">A</span><span class="slant-a">A</span></button>
            <button class="letter" aria-label="增大"><span class="large-a">A</span><svg class="tri"><use href="#triUp"/></svg></button>
            <button class="letter" aria-label="减小"><span class="mid-a">A</span><svg class="tri"><use href="#triDn"/></svg></button>
          </div>
        </div>
        <h2>尺寸</h2>
      </section>
      <section class="group solo"><button class="big drop-big"><svg><use href="#solids"/></svg><span>实体</span></button></section>
      <section class="group solo"><button class="big drop-big"><svg><use href="#faces"/></svg><span>面相关</span></button></section>
      <section class="group solo"><button class="big drop-big"><svg><use href="#pattern"/></svg><span>阵列</span></button></section>
      <section class="group solo"><button class="big drop-big"><svg><use href="#orient"/></svg><span>方向</span></button></section>
      <section class="group solo"><button class="big drop-big"><svg><use href="#style"/></svg><span>样式</span></button></section>
      <section class="group win">
        <button class="big muted drop-big"><svg class="i-win"><use href="#windows"/></svg><span>切换窗口</span></button>
        <h2>窗口</h2>
      </section>
    </div>

    <main class="work">
      <aside class="rail left">
        <button class="bare rail-btn"><svg><use href="#railList"/></svg><span>选择</span></button>
        <button class="bare rail-btn lib"><svg><use href="#railLib"/></svg><span>特征库</span></button>
        <div class="rail-icons">
          <button class="bare" aria-label="零件族"><svg><use href="#railFam"/></svg></button>
          <button class="bare" aria-label="图层"><svg><use href="#railLay"/></svg></button>
          <button class="bare" aria-label="传感器"><svg><use href="#railGauge"/></svg></button>
          <button class="bare" aria-label="播放"><svg><use href="#railPlay"/></svg></button>
          <button class="bare" aria-label="仿真"><svg><use href="#railHeat"/></svg></button>
          <button class="bare" aria-label="仿真结果"><svg><use href="#railHeat2"/></svg></button>
        </div>
      </aside>

      <section class="prompt">
        <div class="prompt-head">
          <svg class="tag"><use href="#solidtag"/></svg>
          <h2>提示条</h2>
          <div class="prompt-ctl">
            <button class="letter dark" aria-label="放大字体"><span class="large-a">A</span><svg class="tri"><use href="#triUp"/></svg></button>
            <button class="letter dark" aria-label="缩小字体"><span class="mid-a">A</span><svg class="tri"><use href="#triDn"/></svg></button>
            <button class="bare shade" aria-label="折叠"><svg class="i16"><use href="#chev"/></svg></button>
            <button class="bare" aria-label="菜单"><svg class="i16"><use href="#menu"/></svg></button>
            <button class="bare" aria-label="固定"><svg class="i16"><use href="#pin"/></svg></button>
            <button class="bare" aria-label="关闭提示条"><svg class="i14"><use href="#close"/></svg></button>
          </div>
        </div>
        <p class="prompt-text">单击“绘制”命令并在平面上创建封闭<br>草图（按<span class="lat11"> F3 </span>锁定至平面），然后单<br>击“实体”命令或选择封闭“区域”以<br>创建特征。</p>
      </section>

      <section class="doc">
        <div class="doc-tabs">
          <div class="doc-tab current"><svg class="i16"><use href="#partTab"/></svg><span>Moveable Jaw-FOP.par</span><button class="bare" aria-label="关闭"><svg class="i12"><use href="#closeThin"/></svg></button></div>
          <div class="doc-tab"><svg class="i16"><use href="#partTab"/></svg><span>零件2</span><button class="bare" aria-label="关闭"><svg class="i12"><use href="#closeThin"/></svg></button></div>
          <span class="badge b4">4</span>
          <div class="doc-nav">
            <button class="bare" aria-label="上一个"><svg class="i12" viewBox="0 0 12 12"><path d="M7.500 2.500v7l-3-3.500z" fill="none" stroke="#666"/></svg></button>
            <button class="bare" aria-label="下一个"><svg class="i12" viewBox="0 0 12 12"><path d="M4.500 2.500v7l3-3.500z" fill="none" stroke="#666"/></svg></button>
            <button class="bare" aria-label="关闭"><svg class="i12"><use href="#closeThin"/></svg></button>
          </div>
        </div>

        <div class="viewport">
          <div class="pathfinder">
            <div class="splitter"><span class="grip"></span><span class="badge b6">6</span></div>
            <ul class="tree">
              <li class="lv0"><span class="node ui"><svg><use href="#part"/></svg>Moveable Jaw-FOP.par</span></li>
              <li class="lv1"><input type="checkbox" aria-label="Base"><span class="node dim"><svg><use href="#axes"/></svg><span class="base">Base</span></span></li>
              <li class="lv2"><span class="node"><svg><use href="#material"/></svg><span class="mat">材料<span class="lat"> (Steel)</span></span></span></li>
              <li class="exp"><button class="bare pm">+</button><input type="checkbox" aria-label="基本参考平面"><span class="node dim"><svg><use href="#refplane"/></svg>基本参考平面</span></li>
              <li class="exp"><button class="bare pm">−</button><span class="bar"><svg><use href="#seq"/></svg>顺序建模<i class="mark"></i></span></li>
              <li class="lv3"><span class="node b"><svg><use href="#extrude"/></svg>拉伸 1</span></li>
              <li class="lv3"><span class="node b"><svg><use href="#hole"/></svg>孔 1</span></li>
              <li class="lv3"><span class="node b sup"><svg><use href="#ban"/></svg><svg><use href="#hole"/></svg>孔 2</span></li>
              <li class="lv3"><span class="node b sup"><svg><use href="#ban"/></svg><svg><use href="#extrude"/></svg>拉伸 2</span></li>
              <li class="lv3"><span class="node b sup"><svg><use href="#ban"/></svg><svg><use href="#hole"/></svg>孔 3</span></li>
              <li class="lv3"><span class="node b sup"><svg><use href="#ban"/></svg><svg><use href="#mirror"/></svg>镜像 1</span></li>
              <li class="lv3"><span class="node b"><svg><use href="#cutout"/></svg>除料 1</span></li>
              <li class="lv3"><span class="node b"><svg><use href="#round"/></svg>倒圆 1</span></li>
              <li class="lv3"><span class="node b"><svg><use href="#hole"/></svg>孔 4</span></li>
              <li class="lv3"><span class="node b"><svg><use href="#mirror"/></svg>镜像 2</span></li>
            </ul>
          </div>

          <svg class="scene" viewBox="512 188 460 496" preserveAspectRatio="xMaxYMax meet" role="img" aria-label="零件模型">
            <g transform="translate(620 310) scale(.33333)" stroke-linejoin="round">
              <path d="M55 655l167 90 446-258v153L545 762 415 833 222 945 95 1017l-40-24z" fill="url(#gMirror)"/>
              <path d="M55 655l152 88v155l18 47L95 1017l-40-24z" fill="#f3f4f6" opacity=".7"/>
              <path d="M209 745h16v150h-16zM409 785l18-10v54l-18 5z" fill="#fafcff"/>
              <path d="M222 935l188-150M430 825l105-110 110-60" fill="none" stroke="#e6e9f2" stroke-width="2"/>
              <ellipse cx="280" cy="790" rx="29" ry="46" transform="rotate(24 280 790)" fill="#f7f9fb"/>
              <ellipse cx="612" cy="597" rx="29" ry="46" transform="rotate(24 612 597)" fill="#f5f8f9"/>

              <g stroke="#50575f" stroke-width="3">
                <path d="M55 315l37 21 115 256v150L55 655z" fill="#9aaabf"/>
                <path d="M62 306L508 48l37 22L100 326z" fill="#adc1d8"/>
                <path d="M105 326l120-68 12 34 103 228-118 68z" fill="#c0d4f8"/>
                <path d="M414 147l129-74 121 259-124 70-100-220z" fill="#c0d4f8"/>
                <path d="M226 590l118-70 196-118 128-70v155L226 742z" fill="url(#gFront)"/>
                <path d="M232 262l178-104v175l-118 68-55-112z" fill="url(#gBack)"/>
                <path d="M296 412l116-68 112 62-178 102z" fill="#a9bfd2"/>
                <path d="M425 180v150l98 54z" fill="#8fa5b5"/>
                <path d="M220 246l185-106q12 4 9 18L234 263q-15-2-14-17z" fill="#a7bde0"/>
                <path d="M408 157h18v178l-10 10-8-10z" fill="url(#gEdge)"/>
                <path d="M412 146q14 5 30 35l98 205 2 22-16-4L429 182l-17-24z" fill="#b1c7ea"/>
                <path d="M292 400l116-68 8 12-119 69z" fill="#b8ccec"/>
                <path d="M416 330l106 56 8 12-8 9-106-60z" fill="#c0d4f0"/>
                <path d="M346 507l180-105 14 8-182 114z" fill="#b1c5ec"/>
                <path d="M92 336l13-10 118 260-16 8z" fill="#b3c9ed"/>
                <path d="M207 592l10-4 9 4v150l-8 4-11-4z" fill="url(#gEdge)"/>
                <path d="M55 315l7-10 40 20-9 13z" fill="#c9dcf5"/>
                <path d="M508 48l38 22 122 262v155" fill="none" stroke-width="5"/>
                <path d="M225 255q-3 15 10 35l105 220 14 13" fill="none" stroke-width="5"/>
              </g>
              <g fill="#d6e6f6" stroke="#687989" stroke-width="2"><circle cx="97" cy="329" r="6"/><circle cx="227" cy="252" r="6"/><circle cx="412" cy="151" r="8"/><circle cx="416" cy="338" r="8"/><path d="M526 384l13 4v20l-12 7-6-11z"/><path d="M344 510l9-2 6 10-8 6z"/></g>
              <ellipse cx="280" cy="636" rx="30" ry="47" transform="rotate(24 280 636)" fill="url(#gHole)" stroke="#445261" stroke-width="3"/>
              <ellipse cx="612" cy="444" rx="30" ry="47" transform="rotate(24 612 444)" fill="url(#gHole)" stroke="#445261" stroke-width="3"/>
            </g>
            <g stroke="#aaa" stroke-linejoin="round">
              <path d="M908 583l36 18-36 21-36-21z" fill="#fefefe"/>
              <path d="M872 601l36 21v42l-33-23z" fill="#fbfbfb"/>
              <path d="M944 601l-36 21v42l33-23z" fill="#eee"/>
            </g>
            <g class="cube-text">
              <text transform="translate(907 598) rotate(210)">TOP</text>
              <text transform="translate(889 636) rotate(28)">BACK</text>
              <text transform="translate(927 636) rotate(-28)">LEFT</text>
            </g>
            <path d="M908 622v-18" stroke="#8a8af2" stroke-width="1.500"/><path d="M906 606l2-4 2 4z" fill="#8a8af2"/>
            <path d="M908 622l-14-8" stroke="#c66"/><path d="M908 622l-15 8" stroke="#5fe05f"/>
            <circle cx="908" cy="622" r="2" fill="#b8b020"/>
          </svg>
          <span class="badge b9">9</span>
        </div>
      </section>

      <aside class="rail right">
        <button class="bare rail-btn"><svg><use href="#railHelp"/></svg><span>学习<span class="lat"> Solid Edge</span></span></button>
        <div class="rail-icons">
          <a class="youtube" href="#youtube"><span>You</span><span class="tube">Tube</span></a>
          <a href="#facebook" aria-label="Facebook"><svg><use href="#facebook"/></svg></a>
          <a href="#community" aria-label="社区"><svg><use href="#sdoc"/></svg></a>
        </div>
      </aside>
    </main>

    <footer class="status">
      <span class="sel-count">选择了 0 项</span>
      <input class="find" type="text" value="查找命令" aria-label="查找命令">
      <span class="badge b7">7</span>
      <span class="badge b8">8</span>
      <div class="status-tools">
        <button class="bare" aria-label="执行"><svg><use href="#go"/></svg></button>
        <button class="bare" aria-label="缩放区域"><svg><use href="#zoomArea"/></svg></button>
        <button class="bare" aria-label="缩放"><svg><use href="#zoom"/></svg></button>
        <button class="bare" aria-label="适合"><svg><use href="#fit"/></svg></button>
        <button class="bare" aria-label="平移"><svg><use href="#pan"/></svg></button>
        <button class="bare" aria-label="旋转"><svg><use href="#rotate"/></svg></button>
        <button class="bare" aria-label="正视于"><svg><use href="#look"/></svg></button>
        <button class="bare" aria-label="视图方向"><svg><use href="#views"/></svg></button>
        <button class="bare" aria-label="视图样式"><svg><use href="#colors"/></svg></button>
      </div>
      <div class="zoombar">
        <button class="bare" aria-label="缩小"><svg><use href="#minus"/></svg></button>
        <input type="range" min="0" max="100" value="44" aria-label="缩放比例">
        <button class="bare" aria-label="放大"><svg><use href="#plus"/></svg></button>
      </div>
      <button class="bare rec" aria-label="录制"><svg><use href="#record"/></svg></button>
      <button class="bare upl" aria-label="上传"><svg><use href="#up"/></svg></button>
    </footer>
  </div>
</div>
</body>
</html>
```
FILE: styles.css
```css
* { box-sizing: border-box; }

body {
  margin: 0;
  background: #fff;
  color: #444;
  font-family: "Noto Sans", "Noto Sans CJK SC", sans-serif;
  font-size: 12px;
  line-height: 16px;
}

h1, h2, p, ul { margin: 0; padding: 0; font-weight: normal; }
svg { display: block; flex: none; }
button, input { font: inherit; color: inherit; }
button { padding: 0; border: 0; background: none; white-space: nowrap; }

.sprite { position: absolute; width: 0; height: 0; }
.i10 { width: 10px; height: 10px; }
.i12 { width: 12px; height: 12px; }
.i14 { width: 14px; height: 14px; }
.i16 { width: 16px; height: 16px; }
.i18 { width: 18px; height: 18px; }
.flip { transform: scaleX(-1); }
.bare { display: flex; align-items: center; justify-content: center; }
.lat, .lat11 { font-family: "Liberation Mono", monospace; font-size: 10px; line-height: 1; white-space: pre; }
.lat11 { font-size: 11px; }

/* lettered size buttons */
.letter { display: flex; align-items: flex-start; color: #24618e; font-family: "Liberation Serif", serif; font-weight: bold; height: 23px; padding-top: 2px; }
.letter .tri { width: 6px; height: 3px; margin-top: 3px; }
.large-a { font-size: 17px; line-height: 20px; }
.mid-a { font-size: 12px; line-height: 20px; margin-left: 2px; }
.small-a { font: 9px/10px "Liberation Sans", sans-serif; color: #111; }
.slant-a { font-size: 15px; line-height: 17px; font-style: italic; color: #17458d; }
.under { height: 19px; width: 16px; border-bottom: 1px solid #111; }
.letter.dark { height: 17px; padding: 0; color: #111; }
.dark span { line-height: 17px; }
.letter.dark .tri { width: 4px; height: 2px; margin-top: 1px; }

.page { display: flex; flex-direction: column; min-height: 100vh; }
.top-strip { position: relative; flex: none; height: 25px; }
.app {
  flex: 1;
  display: flex;
  flex-direction: column;
  border-top: 1px solid #2b579a;
  border-left: 2px solid #2b579a;
}

/* numbered callouts */
.badge {
  position: absolute;
  z-index: 5;
  width: 24px;
  height: 24px;
  border-radius: 50%;
  background: radial-gradient(circle at 40% 30%, #3fc79a, #14906a 55%, #0a5f48);
  box-shadow: 1px 2px 2px rgba(0, 0, 0, .45);
  color: #fff;
  font: bold 12px/24px "DejaVu Sans", sans-serif;
  text-align: center;
}
.b1 { left: 10px; top: 1px; }
.b2 { left: 96px; top: 2px; }
.b4 { left: 247px; top: -4px; }
.b6 { left: 108px; top: -28px; }
.b7 { left: 493px; top: -23px; }
.b8 { left: 689px; top: -24px; }
.b9 { right: 50px; bottom: 104px; }

/* header */
.header {
  display: grid;
  grid-template: 27px 23px / 74px 1fr;
  border-bottom: 1px solid #d5d5d5;
  height: 50px;
}
.brand { grid-row: 1 / 3; display: flex; align-items: flex-start; gap: 10px; padding: 3px 0 0 4px; }
.brand .bare { padding-top: 2px; }
.app-btn { width: 38px; height: 38px; border: 1px solid #2b579a; border-radius: 4px; background: #fff; }
.app-btn svg { width: 36px; height: 36px; }
.title-row { display: flex; align-items: center; border-left: 1px solid #e2e2e2; }
.quick { flex: 1 1 0; display: flex; align-items: center; gap: 5px; padding-left: 5px; }
.quick .drop { gap: 5px; }
.custom { padding-left: 12px; }
.custom svg { width: 9px; height: 7px; }
.title { color: #333; font-size: 12px; padding-bottom: 3px; }
.win-ctl { flex: 1 1 78px; display: flex; align-items: center; justify-content: flex-end; gap: 16px; padding-right: 6px; color: #666; }
.tab-row { display: flex; justify-content: space-between; }
.tabs { display: flex; gap: 1px; }
.tab { height: 23px; padding: 0 14px; color: #333; white-space: pre; }
.tab.active { border: 1px solid #d5d5d5; border-bottom: 0; padding: 0 13px; background: #fff; color: #2b579a; }
.tabs .active { height: 24px; }
.doc-ctl { display: flex; align-items: center; gap: 7px; padding-right: 2px; color: #666; }
.doc-win { display: flex; gap: 5px; }

/* dropdown carets */
.drop::after, .drop-big::after {
  content: "";
  border: 3px solid transparent;
  border-top-color: #777;
  border-bottom: 0;
}
.quick .drop::after { border-top-color: #aaa; }

/* ribbon */
.ribbon {
  display: grid;
  grid-template-columns: 90px 77px 41px 199px 132px 173px repeat(5, 44px) 1fr;
  padding: 4px 2px 6px 0;
  border-bottom: 1px solid #c9c9c9;
}
.group { display: flex; flex-direction: column; border-right: 1px solid #dcdcdc; }
.group h2 { font-size: 11px; line-height: 12px; text-align: center; color: #666; }
.tools { display: flex; height: 69px; }
.clip .tools { padding-left: 10px; gap: 5px; }
.sel .tools { padding-left: 6px; gap: 3px; }
.plane .tools { padding-left: 8px; }
.draw .tools { padding-left: 8px; }
.relate .tools { padding-left: 9px; }
.dims .tools { padding-left: 6px; gap: 4px; }
.cols { display: grid; grid-template-rows: repeat(3, 23px); grid-auto-flow: column; align-content: start; justify-content: start; }
.c34 { grid-auto-columns: 34px; }
.c23 { grid-auto-columns: 23px; }
.split { border-left: 1px solid #dcdcdc; padding-left: 5px; }
.narrow { padding-left: 2px; }
.tool { display: flex; align-items: center; gap: 5px; height: 23px; }
.tool svg { width: 18px; height: 18px; }
.tight { gap: 0; }
.narrow .tool, .wide { width: 23px; justify-content: center; }
.on { background: #c2d5f2; }
.big { display: flex; flex-direction: column; align-items: center; height: 69px; color: #444; }
.big span { margin-top: auto; line-height: 16px; margin-bottom: 8px; }
.drop-big span { margin-bottom: 4px; }
.drop-big::after { margin-bottom: 1px; }
.muted { color: #aaa; }
.muted.drop-big::after { border-top-color: #bbb; }
.pressed { background: #a5bee3; }
.w38 { width: 38px; }
.w42 { width: 42px; }
.w50 { width: 50px; }
.i-paste { width: 30px; height: 32px; margin-top: 3px; }
.i-cursor { width: 20px; height: 30px; margin-top: 4px; }
.i-smart { width: 34px; height: 34px; margin-top: 2px; }
.i-win { width: 34px; height: 34px; margin-top: 2px; }
.solo .big { width: 100%; }
.solo svg { width: 18px; height: 18px; margin-top: 6px; }

/* work area */
.work { flex: 1; display: grid; grid-template-columns: 29px 229px 1fr 28px; }
.rail { display: flex; flex-direction: column; background: #f4f4f4; color: #2b579a; }
.left { padding: 6px 5px 0 2px; }
.rail-btn { flex-direction: column; gap: 3px; }
.rail-btn > span { writing-mode: vertical-rl; text-orientation: sideways; line-height: 16px; }
.rail svg { width: 20px; height: 20px; }
.lib { margin-top: 20px; }
.rail-icons { display: flex; flex-direction: column; align-items: center; gap: 14px; }
.left .rail-icons { margin-top: 100px; }
.right { padding: 7px 1px 0 7px; }
.right .rail-btn { gap: 2px; }
.right .rail-icons { margin-top: 12px; }
.youtube {
  display: flex;
  flex-direction: column;
  width: 20px;
  height: 20px;
  padding: 1px 0;
  color: #222;
  font: bold 8px/9px "Liberation Sans", sans-serif;
  text-align: center;
  text-decoration: none;
}
.youtube span { background: #dfe8f2; }
.youtube .tube { background: #c8202b; color: #fff; }

.prompt { display: flex; flex-direction: column; border-right: 4px solid #f0f0f0; }
.prompt-head { display: flex; align-items: center; height: 22px; padding: 0 4px 4px 5px; gap: 2px; }
.prompt-head h2 { color: #2b579a; font-size: 12px; }
.tag { width: 20px; height: 9px; }
.prompt-ctl { display: flex; margin-left: auto; color: #111; align-items: center; }
.shade { background: #e2e4e8; }
.prompt-text {
  flex: 1;
  border-top: 1px solid #999;
  border-left: 1px solid #999;
  padding-left: 1px;
  color: #111;
  font-family: "Noto Sans CJK SC", sans-serif;
  font-size: 13px;
  line-height: 17px;
  white-space: nowrap;
}

.doc { display: flex; flex-direction: column; min-width: 0; border-left: 1px solid #aaa; }
.doc-tabs { position: relative; display: flex; align-items: center; height: 20px; border-bottom: 1px solid #2b579a; padding-left: 2px; color: #666; }
.doc-tab { display: flex; align-items: center; gap: 3px; height: 19px; padding: 0 3px 0 4px; }
.current { background: #2b579a; color: #fff; padding-right: 1px; }
.doc-nav { display: flex; margin-left: auto; padding-right: 1px; }
.viewport { position: relative; flex: 1; display: grid; grid-template-columns: 251px 1fr; align-items: end; }
.scene { width: 100%; height: auto; }
.cube-text { font: 10px "Liberation Sans", sans-serif; fill: #444; text-anchor: middle; }

/* feature tree */
.pathfinder { padding-bottom: 48px; }
.splitter {
  position: relative;
  display: flex;
  align-items: center;
  justify-content: center;
  height: 9px;
  border: 1px solid #333;
  border-radius: 3px;
  background: linear-gradient(#eee, #aaa);
}
.grip { width: 40px; height: 3px; background: repeating-linear-gradient(90deg, #3f68ae 0 2px, #e6ecf6 2px 4px); }
.tree { list-style: none; margin-top: 3px; }
.tree li { display: flex; align-items: center; height: 16px; padding-left: 5px; }
.tree .lv1 { padding-left: 32px; }
.tree .lv2 { padding-left: 46px; }
.tree .lv3 { padding-left: 73px; }
.tree .exp { padding-left: 16px; }
.node {
  display: flex;
  align-items: center;
  gap: 2px;
  height: 14px;
  padding: 0 7px 0 0;
  border: 1px solid #d8d8d8;
  border-radius: 2px;
  background: linear-gradient(#fafafa, #d9d9d9);
  color: #222;
  line-height: 12px;
  white-space: pre;
}
.node svg { width: 16px; height: 16px; }
.mat { line-height: 12px; }
.base { font-size: 11px; }
.ui { color: #111; gap: 1px; padding-right: 3px; }
.dim { color: #888; }
.b { font-family: "Liberation Mono", "Noto Sans CJK SC", monospace; font-weight: bold; color: #111; }
.sup { gap: 4px; }
.tree input { appearance: none; flex: none; width: 13px; height: 11px; margin: 0 1px 0 0; border: 1px solid #53719f; background: #fff; }
.lv1 input + .node { margin-left: 4px; }
.pm { width: 9px; height: 9px; margin-right: 7px; border: 1px solid #777; color: #111; font: 10px/7px "DejaVu Sans", sans-serif; }
.bar {
  display: flex;
  align-items: center;
  flex: 0 1 183px;
  height: 13px;
  gap: 0;
  padding: 0 10px 0 4px;
  background: linear-gradient(#ffe08a, #ffb52e 60%, #ffc94f);
  border: 1px solid #e0a030;
  color: #111;
  font-weight: bold;
  line-height: 12px;
}
.bar svg { width: 16px; height: 16px; }
.mark { margin-left: auto; border: 5px solid transparent; border-left: 0; border-right: 16px solid #fffbe6; }

/* status bar */
.status {
  position: relative;
  display: flex;
  align-items: center;
  height: 21px;
  background: #2b579a;
  color: #fff;
}
.sel-count { flex: 0 0 440px; padding-left: 251px; }
.find { flex: 0 0 140px; width: 140px; min-width: 0; height: 18px; padding: 0 1px; border: 0; background: #fff; color: #111; }
.status-tools { display: flex; gap: 4px; padding-left: 3px; }
.status svg { width: 18px; height: 18px; }
.zoombar { flex: 1; display: flex; align-items: center; padding-left: 4px; min-width: 0; }
.status .zoombar svg { width: 16px; height: 16px; }
.zoombar input { appearance: none; flex: 1; min-width: 0; height: 16px; margin: 0 2px; background: linear-gradient(#fff, #fff) center / 100% 1px no-repeat; }
.zoombar input::-webkit-slider-thumb {
  appearance: none;
  width: 10px;
  height: 14px;
  border: 1px solid #dfe8f3;
  border-radius: 1px 1px 5px 5px;
  background: linear-gradient(90deg, #60718a 0 4px, #fff 4px 5px, #60718a 5px);
}
.rec { margin-left: 4px; }
.upl { margin: 0 20px 0 6px; }
```
